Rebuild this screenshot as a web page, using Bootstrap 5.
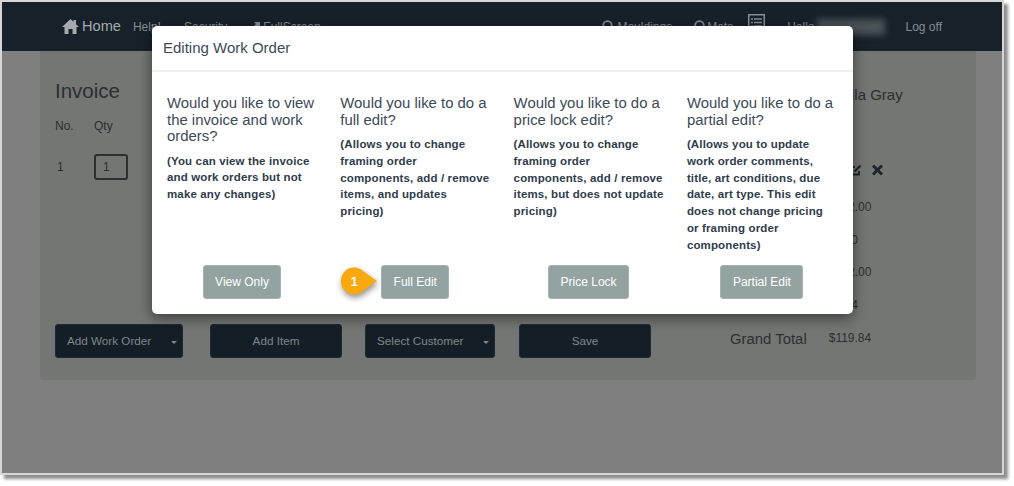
<!DOCTYPE html>
<html lang="en">
<head>
    <meta charset="UTF-8">
    <meta name="viewport" content="width=device-width, initial-scale=1.0">
    <title>Editing Work Order</title>
    <link href="https://cdn.jsdelivr.net/npm/bootstrap@5.3.0/dist/css/bootstrap.min.css" rel="stylesheet">
    <style>
        html, body { height: 100%; overflow: hidden; }
        body { background: #fff; font-family: "Liberation Sans", Arial, sans-serif; color: #2b2f31; font-size: 12px; }
        .shot-frame { position: relative; width: 1004px; height: 475px; border: 2px solid #d6d6d6; background: #7f7f7f; box-shadow: 4px 4px 3px #8c8c8c; }

        /* top bar */
        .top-bar { height: 49px; background: #17212a; color: #868d91; padding: 0 60px; white-space: nowrap; }
        .brand-home { font-size: 14.6px; color: #a4aaad; margin: 0 12px 0 3px; }
        .gap-sec { margin-left: 23px; }
        .gap-full { margin: 0 3px 0 24px; }
        .gap-find { margin-right: 3px; }
        .gap-mats { margin: 0 1px 0 22px; }
        .gap-list { margin: -8px 22px 0 15px; }
        .blur-name { width: 68px; height: 16px; margin: 0 21px 0 2px; background: #4a5257; filter: blur(3px); }

        /* invoice behind the dialog */
        .inv-panel { margin-left: 38px; width: 936px; height: 329px; background: #747674; border-radius: 0 0 3px 3px; padding: 28px 15px 0; }
        .inv-body { height: 245px; }
        .inv-title { font-size: 20.5px; line-height: 24px; margin: 0 0 14px; color: #2b2f31; }
        .no-cell { width: 39px; line-height: 18px; }
        .no-item { padding-left: 2px; }
        .item-row { margin-top: 19px; }
        .qty-box { width: 34px; height: 26px; border: 2px solid #2b2f31; border-radius: 3px; padding: 4px 7px; line-height: 14px; }
        .total-col { width: 60px; margin-right: 73px; }
        .cust-name { font-size: 15px; line-height: 18px; margin: 7px 0 60px 23px; white-space: nowrap; }
        .row-icons { margin: 0 0 22px 22px; height: 12px; gap: 10px; }
        .price-tx { line-height: 18px; margin-bottom: 14.7px; }
        .act-btn { height: 34px; background: #141e27; color: #7f8689; border: 1px solid #1f2a33; border-radius: 3px; font-size: 11.7px; position: relative; padding: 0 11px; }
        .caret-mini { position: absolute; right: 5px; top: 16px; border: 3px solid transparent; border-top-color: #7f8689; border-bottom: 0; }
        .btn-order { width: 128px; }
        .btn-item { width: 132px; margin-left: 27px; }
        .btn-cust { width: 130px; margin-left: 23px; }
        .btn-save { width: 132px; margin-left: 24px; }
        .grand-lbl { font-size: 14.9px; line-height: 18px; margin: 6px 22px 0 79px; }
        .grand-val { line-height: 16px; margin-top: 6px; }

        /* dialog */
        .edit-dialog { position: absolute; top: 24px; left: 150px; width: 701px; height: 288px; background: #fff; border-radius: 5px; box-shadow: 0 4px 14px rgba(0,0,0,.5); color: #3c4a57; }
        .edit-head { height: 46px; border-bottom: 2px solid #eef0f0; padding: 13px 11px; font-size: 15px; line-height: 18px; }
        .edit-cols { padding: 23px 0 0 15px; }
        .edit-col { width: 173.3px; flex-shrink: 0; padding-right: 23.3px; height: 204px; }
        .ask-text { font-size: 14.9px; line-height: 16.5px; margin: 0 0 8px; font-weight: 400; }
        .note-text { font-size: 11.5px; line-height: 16.8px; font-weight: 700; margin: 0; color: #2f3d4b; letter-spacing: .14px; }
        .pick-btn { height: 34px; background: #92a3a1; color: #fff; border: 1px solid #a2b1af; border-radius: 3px; font-size: 12px; padding: 0 11.5px; }
        .step-pin { position: absolute; top: 240px; left: 188px; filter: drop-shadow(1px 3px 3px rgba(0,0,0,.45)); }
    </style>
</head>
<body>
    <div class="shot-frame">
        <div class="top-bar d-flex align-items-center">
            <svg width="17" height="15" viewBox="0 0 17 15"><path fill="#a4aaad" d="M8.5 0 L11.5 2.8 V1 H14 V5.2 L17 8 H14.5 V15 H10.5 V10 H6.5 V15 H2.5 V8 H0 Z"/></svg>
            <span class="brand-home">Home</span>
            <span>Help!</span>
            <span class="gap-sec">Security</span>
            <svg class="gap-full" width="9" height="9" viewBox="0 0 9 9"><path fill="#868d91" d="M3 0 H9 V6 L7 4 L2 9 L0 7 L5 2 Z"/></svg>
            <span>FullScreen</span>
            <div class="ms-auto d-flex align-items-center">
                <svg width="12" height="14" viewBox="0 0 12 14" class="gap-find"><circle cx="5.5" cy="5.5" r="4.3" fill="none" stroke="#868d91" stroke-width="1.8"/><path stroke="#868d91" stroke-width="2" d="M8 9 L11 13"/></svg>
                <span>Mouldings</span>
                <svg width="12" height="14" viewBox="0 0 12 14" class="gap-mats"><circle cx="5.5" cy="5.5" r="4.3" fill="none" stroke="#868d91" stroke-width="1.8"/><path stroke="#868d91" stroke-width="2" d="M8 9 L11 13"/></svg>
                <span>Mats</span>
                <svg width="17" height="18" viewBox="0 0 17 18" class="gap-list"><rect x=".75" y=".75" width="15.5" height="16.5" fill="none" stroke="#868d91" stroke-width="1.5"/><path stroke="#868d91" stroke-width="1.5" d="M3 5 H5 M6 5 H14 M3 8.5 H5 M6 8.5 H14 M3 12 H5 M6 12 H14"/></svg>
                <span>Hello</span>
                <div class="blur-name"></div>
                <span>Log off</span>
            </div>
        </div>
        <div class="inv-panel">
            <div class="inv-body d-flex justify-content-between">
                <div>
                    <h2 class="inv-title">Invoice</h2>
                    <div class="d-flex"><span class="no-cell">No.</span><span>Qty</span></div>
                    <div class="d-flex item-row align-items-center"><span class="no-cell no-item">1</span><span class="qty-box">1</span></div>
                </div>
                <div class="total-col">
                    <div class="cust-name">lla Gray</div>
                    <div class="row-icons d-flex">
                        <svg width="12" height="12" viewBox="0 0 12 12"><path fill="none" stroke="#1d262d" stroke-width="1.8" d="M9 7 V10.5 H1.5 V3 H5"/><path stroke="#1d262d" stroke-width="2.2" d="M4.5 7.5 L10.5 1.5"/></svg>
                        <svg width="11" height="12" viewBox="0 0 11 12"><path stroke="#1d262d" stroke-width="3" d="M1 1.5 L10 10.5 M10 1.5 L1 10.5"/></svg>
                    </div>
                    <div class="price-tx">$102.00</div>
                    <div class="price-tx">$0.00</div>
                    <div class="price-tx">$102.00</div>
                    <div class="price-tx">$7.84</div>
                </div>
            </div>
            <div class="d-flex align-items-start">
                <button class="btn act-btn btn-order text-start">Add Work Order<i class="caret-mini"></i></button>
                <button class="btn act-btn btn-item">Add Item</button>
                <button class="btn act-btn btn-cust text-start">Select Customer<i class="caret-mini"></i></button>
                <button class="btn act-btn btn-save">Save</button>
                <span class="grand-lbl">Grand Total</span>
                <span class="grand-val">$119.84</span>
            </div>
        </div>
        <div class="edit-dialog">
            <div class="edit-head">Editing Work Order</div>
            <div class="edit-cols d-flex">
                <div class="edit-col d-flex flex-column">
                    <h5 class="ask-text">Would you like to view the invoice and work orders?</h5>
                    <p class="note-text">(You can view the invoice and work orders but not make any changes)</p>
                    <button class="btn pick-btn mt-auto align-self-center">View Only</button>
                </div>
                <div class="edit-col d-flex flex-column">
                    <h5 class="ask-text">Would you like to do a full edit?</h5>
                    <p class="note-text">(Allows you to change framing order components, add / remove items, and updates pricing)</p>
                    <button class="btn pick-btn mt-auto align-self-center">Full Edit</button>
                </div>
                <div class="edit-col d-flex flex-column">
                    <h5 class="ask-text">Would you like to do a price lock edit?</h5>
                    <p class="note-text">(Allows you to change framing order components, add / remove items, but does not update pricing)</p>
                    <button class="btn pick-btn mt-auto align-self-center">Price Lock</button>
                </div>
                <div class="edit-col d-flex flex-column">
                    <h5 class="ask-text">Would you like to do a partial edit?</h5>
                    <p class="note-text">(Allows you to update work order comments, title, art conditions, due date, art type. This edit does not change pricing or framing order components)</p>
                    <button class="btn pick-btn mt-auto align-self-center">Partial Edit</button>
                </div>
            </div>
            <svg class="step-pin" width="38" height="30" viewBox="0 0 38 30"><path fill="#f9a80f" d="M14 1.5 C19 1.5 22 4 25 6.5 L37 15 L25 23.5 C22 26 19 28.5 14 28.5 C6.5 28.5 1 22.5 1 15 S6.5 1.5 14 1.5 Z"/><text x="14" y="19.5" font-size="13" font-weight="700" fill="#fff" text-anchor="middle" font-family="Liberation Sans">1</text></svg>
        </div>
    </div>
    <script src="https://cdn.jsdelivr.net/npm/bootstrap@5.3.0/dist/js/bootstrap.bundle.min.js"></script>
</body>
</html>
